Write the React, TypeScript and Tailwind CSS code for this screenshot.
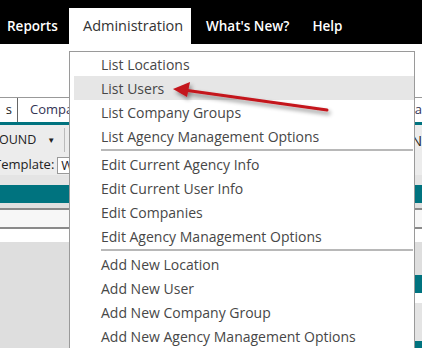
import React from 'react';

const groups: string[][] = [
  ['List Locations', 'List Users', 'List Company Groups', 'List Agency Management Options'],
  ['Edit Current Agency Info', 'Edit Current User Info', 'Edit Companies', 'Edit Agency Management Options'],
  ['Add New Location', 'Add New User', 'Add New Company Group', 'Add New Agency Management Options'],
];

function NavBar() {
  return (
    <div className="h-[44px] bg-black flex items-end text-[13.5px] font-semibold text-white">
      <div className="w-[69px] h-[36px] flex items-center pl-[7px]">Reports</div>
      <div className="w-[122px] h-[36px] bg-white flex items-center pl-[14px] text-[14.5px] font-normal text-[#333]">
        Administration
      </div>
      <div className="h-[36px] flex items-center pl-[15px]">What's New?</div>
      <div className="h-[36px] flex items-center pl-[23px]">Help</div>
    </div>
  );
}

function PageBehind() {
  return (
    <div className="flex flex-col text-[13px] text-[#222]">
      <div className="h-[53px] bg-white" />
      <div className="h-[25px] border-t border-[#999] flex items-center">
        <div className="w-[18px] h-full border-r border-[#666] flex items-center justify-end pr-[5px]">s</div>
        <div className="flex-1 flex items-center pl-[12px] text-[#335]">Companies</div>
        <div className="text-[#335]">Sea</div>
      </div>
      <div className="h-[3px] bg-[#00737f]" />
      <div className="h-[30px] bg-[#ececec] flex items-center">
        <span className="ml-[-1px] text-[12.5px]">OUND</span>
        <span className="ml-[11px] text-[8px]">▼</span>
        <div className="ml-[9px] w-px h-[24px] bg-[#bbb]" />
        <div className="flex-1" />
        <span className="text-[14px]">N</span>
      </div>
      <div className="h-[20px] bg-[#ececec] flex items-center">
        <span className="ml-[-6px]">Template:</span>
        <div className="ml-[3px] h-[17px] w-[40px] bg-white border border-[#999] pl-[3px] leading-[15px]">W</div>
      </div>
      <div className="h-[10px] bg-[#e4e4e4]" />
      <div className="h-[18px] bg-[#00737f]" />
      <div className="h-[5px] bg-[#e0e0e0]" />
      <div className="h-[19px] bg-[#f7f7f7] border-t-2 border-[#8a8a8a]" />
      <div className="h-[15px] bg-white border-t-2 border-[#8a8a8a]" />
      <div className="h-[107px] bg-[#dedede] flex justify-end">
        <div className="w-[8px] flex flex-col">
          <div className="h-[33px] bg-[#dedede]" />
          <div className="h-[18px] bg-[#00737f]" />
          <div className="h-[10px] bg-white" />
          <div className="h-[38px] bg-[#e4e4e4]" />
          <div className="flex-1 bg-[#00737f]" />
        </div>
      </div>
    </div>
  );
}

function Dropdown() {
  return (
    <div className="absolute left-[69px] top-[51px] w-[346px] h-[310px] bg-white border border-[#9a9a9a] text-[14px] text-[#474747]">
      {groups.map((items, gi) => (
        <div key={gi}>
          {gi > 0 && <div className="ml-[31px] mr-[1px] my-[1px] h-[2px] bg-[#b8b8b8]" />}
          <div className="flex flex-col">
            {items.map((label) =>
              label === 'List Users' ? (
                <div key={label} className="h-[24px] flex items-center ml-[4px] pl-[27px] bg-[#e6e6e6]">
                  {label}
                </div>
              ) : (
                <div key={label} className="h-[24px] flex items-center pl-[31px]">
                  {label}
                </div>
              )
            )}
          </div>
        </div>
      ))}
    </div>
  );
}

function Arrow() {
  return (
    <svg className="absolute inset-0 pointer-events-none" width="422" height="348" viewBox="0 0 422 348">
      <defs>
        <filter id="sh" x="-20%" y="-50%" width="140%" height="200%">
          <feDropShadow dx="2" dy="3" stdDeviation="2" floodColor="#000" floodOpacity="0.45" />
        </filter>
      </defs>
      <g filter="url(#sh)">
        <line x1="327" y1="110" x2="184" y2="90" stroke="#c4141c" strokeWidth="3" strokeLinecap="round" />
        <polygon points="173,89 190,82 187,97" fill="#c4141c" />
      </g>
    </svg>
  );
}

export default function App() {
  return (
    <div
      className="relative w-[422px] h-[348px] overflow-hidden bg-white"
      style={{ fontFamily: '"Open Sans", "Noto Sans", sans-serif' }}
    >
      <NavBar />
      <PageBehind />
      <Dropdown />
      <Arrow />
    </div>
  );
}
